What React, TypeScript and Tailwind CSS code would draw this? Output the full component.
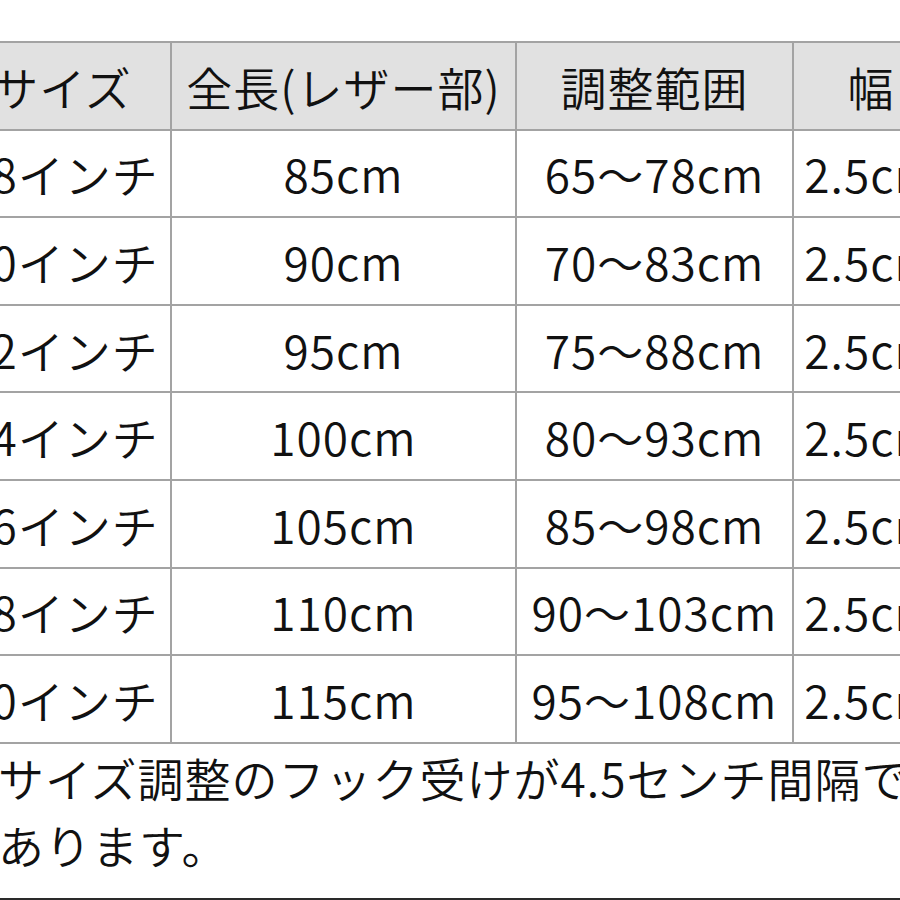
import React from "react";

/* ================= DATA ================= */

const headers = ["サイズ", "全長(レザー部)", "調整範囲", "幅"];

const rows = [
  ["28インチ", "85cm", "65～78cm", "2.5cm"],
  ["30インチ", "90cm", "70～83cm", "2.5cm"],
  ["32インチ", "95cm", "75～88cm", "2.5cm"],
  ["34インチ", "100cm", "80～93cm", "2.5cm"],
  ["36インチ", "105cm", "85～98cm", "2.5cm"],
  ["38インチ", "110cm", "90～103cm", "2.5cm"],
  ["40インチ", "115cm", "95～108cm", "2.5cm"],
];

/* ================= STYLES ================= */

const cellClass =
  "flex h-[87.6px] items-center justify-center whitespace-nowrap border-b-2 border-r-2 border-[#a3a3a3]";

/* ================= COMPONENT ================= */

const App: React.FC = () => {
  return (
    <div
      className="h-[900px] w-[900px] overflow-hidden bg-white text-[46px] font-[350] leading-none tracking-[1px] text-[#111111]"
      style={{ fontFamily: '"Noto Sans CJK JP", "Noto Sans", sans-serif' }}
    >
      {/* SIZE TABLE */}
      <div className="ml-[-48px] mt-[41px] grid w-[996px] grid-cols-[218px_345px_277px_156px] border-l-2 border-t-2 border-[#a3a3a3]">
        {headers.map(h => (
          <div key={h} className={`${cellClass} bg-[#e1e1e1]`}>
            {h}
          </div>
        ))}
        {rows.map(row =>
          row.map((cell, i) => (
            <div key={row[0] + i} className={cellClass}>
              {cell}
            </div>
          ))
        )}
      </div>

      {/* NOTE */}
      <p className="ml-[-2px] whitespace-nowrap leading-[67px]">
        サイズ調整のフック受けが4.5センチ間隔で
        <br />
        あります。
      </p>

      <div className="mt-[20px] h-[2px] w-full bg-[#2a2a2a]" />
    </div>
  );
};

export default App;
